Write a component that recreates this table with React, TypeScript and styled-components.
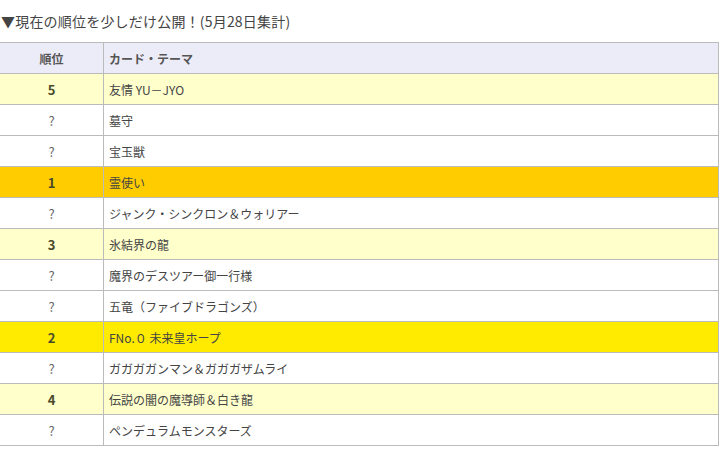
import React from "react";
import styled, { createGlobalStyle } from "styled-components";

type Tone = "plain" | "light" | "gold" | "yellow";

interface Entry {
  rank: string;
  name: string;
  tone: Tone;
}

const entries: Entry[] = [
  { rank: "5", name: "友情 YU－JYO", tone: "light" },
  { rank: "?", name: "墓守", tone: "plain" },
  { rank: "?", name: "宝玉獣", tone: "plain" },
  { rank: "1", name: "霊使い", tone: "gold" },
  { rank: "?", name: "ジャンク・シンクロン＆ウォリアー", tone: "plain" },
  { rank: "3", name: "氷結界の龍", tone: "light" },
  { rank: "?", name: "魔界のデスツアー御一行様", tone: "plain" },
  { rank: "?", name: "五竜（ファイブドラゴンズ）", tone: "plain" },
  { rank: "2", name: "FNo.０ 未来皇ホープ", tone: "yellow" },
  { rank: "?", name: "ガガガガンマン＆ガガガザムライ", tone: "plain" },
  { rank: "4", name: "伝説の闇の魔導師＆白き龍", tone: "light" },
  { rank: "?", name: "ペンデュラムモンスターズ", tone: "plain" },
];

const toneColors: Record<Tone, string> = {
  plain: "#ffffff",
  light: "#ffffcc",
  gold: "#ffcc00",
  yellow: "#ffeb00",
};

const GlobalStyle = createGlobalStyle`
  html, body {
    margin: 0;
    padding: 0;
    background: #ffffff;
  }
  body {
    font-family: "Noto Sans CJK JP", "Noto Sans", sans-serif;
    color: #444;
    overflow: hidden;
  }
`;

const Page = styled.div`
  width: 721px;
`;

const Heading = styled.div`
  padding: 11px 0 0 1px;
  margin-bottom: 11px;
  font-size: 14px;
  line-height: 20px;
  letter-spacing: 0.2px;
  color: #444;
  white-space: nowrap;
`;

const Table = styled.table`
  border-collapse: collapse;
  margin-left: -1px;
  width: 720px;
  table-layout: fixed;
  font-size: 12px;
`;

const HeadCell = styled.th<{ $center?: boolean }>`
  background: #ececf8;
  border: 1px solid #bbbbbb;
  height: 30px;
  padding: 0 5px;
  font-weight: bold;
  color: #555;
  text-align: ${({ $center }) => ($center ? "center" : "left")};
`;

const Row = styled.tr<{ $tone: Tone }>`
  background: ${({ $tone }) => toneColors[$tone]};
`;

const RankCell = styled.td<{ $known: boolean }>`
  border: 1px solid #bbbbbb;
  height: 30px;
  padding: 0;
  text-align: center;
  font-weight: ${({ $known }) => ($known ? "bold" : "normal")};
  color: ${({ $known }) => ($known ? "#4a4a2a" : "#666")};
  font-size: 13px;
`;

const NameCell = styled.td`
  border: 1px solid #bbbbbb;
  height: 30px;
  padding: 0 5px;
  color: #444;
  white-space: nowrap;
`;

export default function App() {
  return (
    <Page>
      <GlobalStyle />
      <Heading>▼現在の順位を少しだけ公開！(5月28日集計)</Heading>
      <Table>
        <colgroup>
          <col style={{ width: 104 }} />
          <col />
        </colgroup>
        <thead>
          <tr>
            <HeadCell $center>順位</HeadCell>
            <HeadCell>カード・テーマ</HeadCell>
          </tr>
        </thead>
        <tbody>
          {entries.map((entry, i) => (
            <Row key={i} $tone={entry.tone}>
              <RankCell $known={entry.rank !== "?"}>{entry.rank}</RankCell>
              <NameCell>{entry.name}</NameCell>
            </Row>
          ))}
        </tbody>
      </Table>
    </Page>
  );
}
